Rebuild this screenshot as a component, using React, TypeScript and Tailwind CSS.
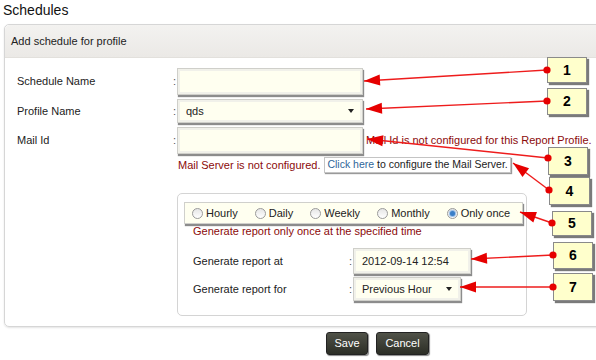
import React from 'react';

type Callout = { n: number; box: [number, number, number, number]; dot: [number, number]; tip: [number, number] };

const callouts: Callout[] = [
  { n: 1, box: [547, 57, 40, 26], dot: [547, 70], tip: [364, 81] },
  { n: 2, box: [547, 88, 40, 27], dot: [547, 101], tip: [366, 109] },
  { n: 3, box: [548, 147, 40, 28], dot: [548, 158], tip: [367, 139] },
  { n: 4, box: [549, 177, 41, 28], dot: [549, 190], tip: [513, 163] },
  { n: 5, box: [552, 211, 40, 25], dot: [552, 223], tip: [520, 212] },
  { n: 6, box: [553, 242, 40, 27], dot: [553, 255], tip: [471, 259] },
  { n: 7, box: [553, 273, 40, 28], dot: [553, 287], tip: [460, 287] },
];

const arrowHead = (from: [number, number], to: [number, number]) => {
  const dx = from[0] - to[0];
  const dy = from[1] - to[1];
  const len = Math.hypot(dx, dy);
  const ux = dx / len;
  const uy = dy / len;
  const bx = to[0] + ux * 16;
  const by = to[1] + uy * 16;
  const px = -uy * 5.5;
  const py = ux * 5.5;
  return `${to[0]},${to[1]} ${bx + px},${by + py} ${bx - px},${by - py}`;
};

const Colon = () => <span className="w-[4px] text-[#555]">:</span>;

const TextBox = ({ value = '', w, h }: { value?: string; w: string; h: string }) => (
  <div className={`${w} ${h} border border-[#cfcfca] bg-[#fffff0] shadow-[1px_2px_1px_#8c8c8c,inset_0_0_0_2px_#f1f1ea] flex items-center pl-[8px] text-[11px] text-[#222]`}>
    {value}
  </div>
);

const SelectBox = ({ value, w }: { value: string; w: string }) => (
  <div className={`${w} h-[24px] border border-[#cfcfca] bg-[#fffff0] shadow-[1px_2px_1px_#8c8c8c,inset_0_0_0_2px_#f1f1ea] flex items-center justify-between pl-[8px] pr-[8px] text-[11px] text-[#222]`}>
    <span>{value}</span>
    <span className="w-0 h-0 border-l-[3.5px] border-r-[3.5px] border-t-[4px] border-l-transparent border-r-transparent border-t-[#222]" />
  </div>
);

const Radio = ({ label, checked = false }: { label: string; checked?: boolean }) => (
  <label className="flex items-center gap-[3px]">
    <span className="w-[11px] h-[11px] rounded-full border border-[#9a9a9a] bg-gradient-to-b from-[#e6e6e6] to-white flex items-center justify-center">
      {checked && <span className="w-[5px] h-[5px] rounded-full bg-[#3a7fc8] shadow-[0_0_1px_1px_#8fb8e6]" />}
    </span>
    <span>{label}</span>
  </label>
);

export default function App() {
  return (
    <div className="relative w-[596px] h-[360px] bg-white overflow-hidden font-['Liberation_Sans',Arial,sans-serif] text-[11px] text-[#222]">
      <h1 className="h-[24px] pl-[3px] pt-[1px] text-[14px] leading-[18px] text-[#111]">Schedules</h1>

      <div className="ml-[4px] w-[620px] border border-[#d6d6d6] rounded-l-[5px] shadow-[0_1px_2px_#e4e4e4]">
        <div className="h-[33px] flex items-center pl-[6px] bg-gradient-to-b from-[#f3f2f0] to-[#ebe9e6] border-b border-[#e2e0dc] rounded-tl-[5px]">
          Add schedule for profile
        </div>

        <div className="pl-[12px] pt-[10px] pb-[10px]">
          <div className="flex items-center">
            <span className="w-[156px]">Schedule Name</span>
            <Colon />
            <TextBox w="w-[186px]" h="h-[27px]" />
          </div>
          <div className="flex items-center mt-[4px]">
            <span className="w-[156px]">Profile Name</span>
            <Colon />
            <SelectBox value="qds" w="w-[186px]" />
          </div>
          <div className="flex items-center mt-[4px]">
            <span className="w-[156px]">Mail Id</span>
            <Colon />
            <TextBox w="w-[186px]" h="h-[27px]" />
            <span className="ml-[3px] text-[#8b0a0a] whitespace-nowrap">Mail Id is not configured for this Report Profile.</span>
          </div>
          <div className="flex items-center mt-[3px] ml-[161px] h-[16px]">
            <span className="text-[#8b0a0a]">Mail Server is not configured.</span>
            <span className="ml-[4px] h-[16px] px-[2px] flex items-center border border-[#c4c4c4] bg-white shadow-[1px_1px_1px_#9a9a9a] text-[10.5px] whitespace-nowrap">
              <span className="text-[#2f6699]">Click here</span>
              <span>&nbsp;to configure the Mail Server.</span>
            </span>
          </div>

          <div className="ml-[160px] mt-[20px] w-[350px] h-[123px] border border-[#d4d4d4] rounded-[5px] pt-[8px]">
            <div className="ml-[6px] w-[339px] h-[22px] border border-[#d0d0cc] bg-[#fffff0] shadow-[1px_2px_1px_#8c8c8c] flex items-center gap-[17px] pl-[7px]">
              <Radio label="Hourly" />
              <Radio label="Daily" />
              <Radio label="Weekly" />
              <Radio label="Monthly" />
              <Radio label="Only once" checked />
            </div>
            <div className="ml-[15px] mt-[1px] h-[12px] leading-[12px] text-[#8b0a0a]">Generate report only once at the specified time</div>
            <div className="flex items-center ml-[15px] mt-[11px]">
              <span className="w-[156px]">Generate report at</span>
              <Colon />
              <TextBox value="2012-09-14 12:54" w="w-[118px]" h="h-[26px]" />
            </div>
            <div className="flex items-center ml-[15px] mt-[3px]">
              <span className="w-[156px]">Generate report for</span>
              <Colon />
              <SelectBox value="Previous Hour" w="w-[108px]" />
            </div>
          </div>
        </div>
      </div>

      <div className="flex gap-[8px] pl-[326px] mt-[5px]">
        <button className="w-[42px] h-[23px] rounded-[3px] border border-[#222] bg-gradient-to-b from-[#505248] to-[#2c2e26] text-white text-[11px] shadow-[1px_1px_1px_#888]">Save</button>
        <button className="w-[53px] h-[23px] rounded-[3px] border border-[#222] bg-gradient-to-b from-[#505248] to-[#2c2e26] text-white text-[11px] shadow-[1px_1px_1px_#888]">Cancel</button>
      </div>

      <svg className="absolute inset-0 pointer-events-none" width="596" height="360">
        {callouts.map((c) => (
          <g key={c.n}>
            <line x1={c.dot[0]} y1={c.dot[1]} x2={c.tip[0]} y2={c.tip[1]} stroke="#ee1c1c" strokeWidth="1.4" />
            <polygon points={arrowHead(c.dot, c.tip)} fill="#e60000" />
          </g>
        ))}
      </svg>

      {callouts.map((c) => (
        <div
          key={c.n}
          className="absolute flex items-center justify-center bg-[#ffffcc] border border-[#8a8a8a] shadow-[2px_2px_1px_#7a7a7a] font-['Liberation_Sans',Arial,sans-serif] font-bold text-[14px] text-black"
          style={{ left: c.box[0], top: c.box[1], width: c.box[2], height: c.box[3] }}
        >
          {c.n}
        </div>
      ))}

      <svg className="absolute inset-0 pointer-events-none" width="596" height="360">
        {callouts.map((c) => (
          <circle key={c.n} cx={c.dot[0]} cy={c.dot[1]} r="3.6" fill="#e60000" />
        ))}
      </svg>
    </div>
  );
}
